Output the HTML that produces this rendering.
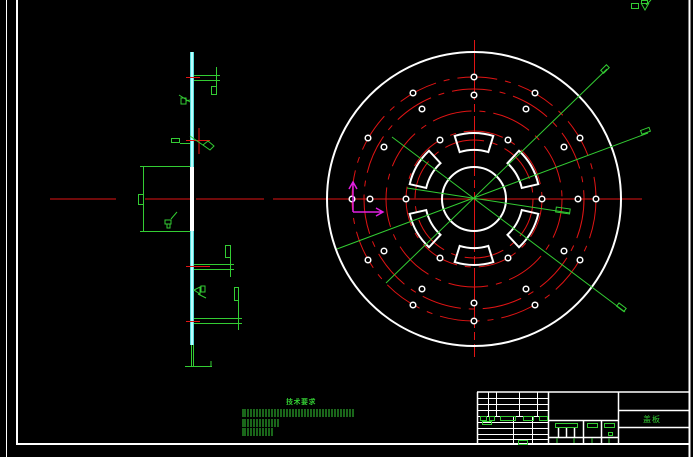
<!DOCTYPE html>
<html><head><meta charset="utf-8"><style>
html,body{margin:0;padding:0;background:#000;width:693px;height:457px;overflow:hidden}
svg{display:block}
text{font-family:"Liberation Sans","Noto Sans CJK SC",sans-serif}
</style></head><body>
<svg width="693" height="457" viewBox="0 0 693 457" xmlns="http://www.w3.org/2000/svg">
<rect width="693" height="457" fill="#000"/>
<g stroke="#fff" fill="none">
<line x1="6.5" y1="0" x2="6.5" y2="457" stroke-width="1"/>
<line x1="17" y1="0" x2="17" y2="444" stroke-width="2"/>
<line x1="16" y1="444" x2="690" y2="444" stroke-width="2"/>
<line x1="689.5" y1="0" x2="689.5" y2="457" stroke-width="2"/>
</g>
<g stroke="#3c3" fill="none" stroke-width="1">
<rect x="631.5" y="3.5" width="7" height="5"/>
<rect x="641.5" y="0.5" width="6" height="3"/>
<path d="M641 3 L645 10 L649 3 M651 0 L646 5"/>
</g>
<g stroke="#e01414" stroke-width="1" fill="none">
<line x1="50" y1="199" x2="116" y2="199"/>
<line x1="145" y1="199" x2="190" y2="199"/>
<line x1="196" y1="199" x2="264" y2="199"/>
<line x1="273" y1="199" x2="642" y2="199"/>
<line x1="474.5" y1="40" x2="474.5" y2="357" stroke-dasharray="60 4 8 4"/>
<g stroke-dasharray="40 8 6 8">
<circle cx="474" cy="199" r="122"/>
<circle cx="474" cy="199" r="110"/>
<circle cx="474" cy="199" r="88"/>
<circle cx="474" cy="199" r="68"/>
<circle cx="474" cy="199" r="59"/>
</g>
</g>
<circle cx="474" cy="199" r="147" stroke="#fff" stroke-width="2" fill="none"/>
<circle cx="474" cy="199" r="32" stroke="#fff" stroke-width="2" fill="none"/>
<g stroke="#fff" stroke-width="2" fill="none">
<path id="s" d="M454.7,135.9 A66 66 0 0 1 493.3,135.9 L488.3,152.1 A49 49 0 0 0 459.7,152.1 Z"/>
<use href="#s" transform="rotate(60 474 199)"/>
<use href="#s" transform="rotate(120 474 199)"/>
<use href="#s" transform="rotate(180 474 199)"/>
<use href="#s" transform="rotate(240 474 199)"/>
<use href="#s" transform="rotate(300 474 199)"/>
</g>
<g stroke="#fff" stroke-width="1.5" fill="#000">
<circle cx="474" cy="77" r="2.8"/><circle cx="535" cy="93" r="2.8"/><circle cx="580" cy="138" r="2.8"/><circle cx="596" cy="199" r="2.8"/><circle cx="580" cy="260" r="2.8"/><circle cx="535" cy="305" r="2.8"/><circle cx="474" cy="321" r="2.8"/><circle cx="413" cy="305" r="2.8"/><circle cx="368" cy="260" r="2.8"/><circle cx="352" cy="199" r="2.8"/><circle cx="368" cy="138" r="2.8"/><circle cx="413" cy="93" r="2.8"/>
<circle cx="474" cy="95" r="2.8"/><circle cx="526" cy="109" r="2.8"/><circle cx="564" cy="147" r="2.8"/><circle cx="578" cy="199" r="2.8"/><circle cx="564" cy="251" r="2.8"/><circle cx="526" cy="289" r="2.8"/><circle cx="474" cy="303" r="2.8"/><circle cx="422" cy="289" r="2.8"/><circle cx="384" cy="251" r="2.8"/><circle cx="370" cy="199" r="2.8"/><circle cx="384" cy="147" r="2.8"/><circle cx="422" cy="109" r="2.8"/>
<circle cx="542" cy="199" r="2.8"/><circle cx="508" cy="140" r="2.8"/><circle cx="440" cy="140" r="2.8"/><circle cx="406" cy="199" r="2.8"/><circle cx="440" cy="258" r="2.8"/><circle cx="508" cy="258" r="2.8"/>
</g>
<g stroke="#3c3" stroke-width="1" fill="none">
<line x1="607" y1="69" x2="386" y2="283"/>
<line x1="648" y1="133" x2="337" y2="249"/>
<line x1="392" y1="137" x2="625" y2="312"/>
<line x1="407" y1="188" x2="570" y2="213"/>
<rect x="601" y="67" width="8" height="4" transform="rotate(-45 605 69)"/>
<rect x="641" y="129" width="9" height="4" transform="rotate(-20 645 131)"/>
<rect x="617" y="305" width="9" height="4" transform="rotate(37 621 307)"/>
<rect x="556" y="208" width="14" height="5" transform="rotate(8 563 210)"/>
</g>
<g stroke="#e020e0" stroke-width="1.5" fill="none">
<path d="M353 212 L353 182 M349 189 L353 182 L357 189 M353 212 L383 212 M376 208 L383 212 L376 216"/>
</g>
<rect x="190" y="52" width="4" height="293" fill="#5dd" />
<rect x="191" y="52" width="2" height="293" fill="#bff" />
<rect x="190" y="167" width="4" height="64" fill="#fff"/>
<g stroke="#e01414" stroke-width="1">
<line x1="186" y1="77.5" x2="200" y2="77.5"/>
<line x1="186" y1="140.5" x2="210" y2="140.5"/>
<line x1="199" y1="128" x2="199" y2="154"/>
<line x1="186" y1="266.5" x2="210" y2="266.5"/>
<line x1="186" y1="321.5" x2="200" y2="321.5"/>
</g>
<g stroke="#3c3" stroke-width="1" fill="none">
<line x1="140" y1="166.5" x2="190" y2="166.5"/>
<line x1="140" y1="231.5" x2="190" y2="231.5"/>
<line x1="143.5" y1="166" x2="143.5" y2="232"/>
<rect x="138.5" y="194.5" width="5" height="10"/>
<line x1="194" y1="75.5" x2="220" y2="75.5"/>
<line x1="194" y1="80.5" x2="220" y2="80.5"/>
<line x1="216.5" y1="67" x2="216.5" y2="90"/>
<rect x="211.5" y="86.5" width="5" height="8"/>
<path d="M179 95 L190 102 M181 98 h5 v6 h-5 z M186 101 L190 100"/>
<rect x="171.5" y="138.5" width="8" height="4"/>
<line x1="180" y1="143.5" x2="190" y2="143.5"/>
<path d="M190 136 L210 150 M203 145 L208 141 L214 146 L210 150 Z"/>
<path d="M165 220 h6 v4 h-6 z M167 224 v4 h3 v-4 M171 219 L177 212"/>
<line x1="194" y1="264.5" x2="234" y2="264.5"/>
<line x1="194" y1="269.5" x2="234" y2="269.5"/>
<line x1="230.5" y1="257" x2="230.5" y2="277"/>
<rect x="225.5" y="245.5" width="5" height="12"/>
<path d="M194 290 L200 287 L200 294 Z M201 286 h4 v6 h-4 z M198 294 L206 298"/>
<line x1="194" y1="318.5" x2="242" y2="318.5"/>
<line x1="194" y1="323.5" x2="242" y2="323.5"/>
<line x1="238.5" y1="300" x2="238.5" y2="330"/>
<rect x="234.5" y="287.5" width="4" height="13"/>
<line x1="191.5" y1="345" x2="191.5" y2="366"/>
<line x1="193.5" y1="345" x2="193.5" y2="366"/>
<line x1="185" y1="366.5" x2="212" y2="366.5"/>
<line x1="211" y1="361" x2="211" y2="367"/>
</g>
<text x="286" y="404" font-size="7" font-weight="bold" fill="#3c3" letter-spacing="0.5">技术要求</text>
<g stroke="#3c3" stroke-width="1">
<path d="M243 409v8 M245 409v8 M248 409v8 M251 409v8 M254 409v8 M257 409v8 M260 409v8 M263 409v8 M266 409v8 M269 409v8 M272 409v8 M275 409v8 M278 409v8 M281 409v8 M284 409v8 M287 409v8 M290 409v8 M293 409v8 M296 409v8 M299 409v8 M302 409v8 M305 409v8 M308 409v8 M311 409v8 M314 409v8 M317 409v8 M320 409v8 M323 409v8 M326 409v8 M329 409v8 M332 409v8 M335 409v8 M338 409v8 M341 409v8 M344 409v8 M347 409v8 M350 409v8 M353 409v8"/>
<path d="M243 419v8 M245 419v8 M248 419v8 M251 419v8 M254 419v8 M257 419v8 M260 419v8 M263 419v8 M266 419v8 M269 419v8 M272 419v8 M275 419v8 M278 419v8"/>
<path d="M243 428v8 M245 428v8 M248 428v8 M251 428v8 M254 428v8 M257 428v8 M260 428v8 M263 428v8 M266 428v8 M269 428v8 M272 428v8"/>
</g>
<g stroke="#fff" stroke-width="1.5" fill="none">
<line x1="477" y1="392" x2="690" y2="392"/>
<line x1="477.5" y1="392" x2="477.5" y2="444"/>
<line x1="548.5" y1="392" x2="548.5" y2="444"/>
<line x1="618.5" y1="392" x2="618.5" y2="444"/>
<line x1="618" y1="410.5" x2="690" y2="410.5"/>
<line x1="618" y1="427.5" x2="690" y2="427.5"/>
<line x1="548" y1="420.5" x2="618" y2="420.5"/>
<line x1="548" y1="437.5" x2="618" y2="437.5"/>
<line x1="583.5" y1="420" x2="583.5" y2="444"/>
<line x1="601.5" y1="420" x2="601.5" y2="444"/>
<line x1="558.5" y1="427" x2="558.5" y2="437"/>
<line x1="566.5" y1="427" x2="566.5" y2="437"/>
<line x1="574.5" y1="427" x2="574.5" y2="437"/>
</g>
<g stroke="#fff" stroke-width="1" fill="none">
<path d="M477 398.5h71 M477 404.5h71 M477 410.5h71 M477 416.5h71 M477 422.5h71 M477 428.5h71 M477 434.5h71 M477 439.5h71"/>
<path d="M488.5 392v24 M496.5 392v24 M519.5 392v24 M537.5 392v24 M513.5 416v28 M532.5 416v28"/>
</g>
<g stroke="#3c3" stroke-width="1" fill="none">
<rect x="480.5" y="416.5" width="6" height="4"/><rect x="489.5" y="416.5" width="5" height="4"/><rect x="500.5" y="416.5" width="15" height="4"/><rect x="523.5" y="416.5" width="10" height="4"/><rect x="539.5" y="416.5" width="8" height="4"/>
<rect x="482.5" y="421.5" width="9" height="3"/><rect x="518.5" y="440.5" width="9" height="4"/>
<rect x="555.5" y="423.5" width="22" height="4"/><rect x="587.5" y="423.5" width="10" height="4"/><rect x="604.5" y="423.5" width="10" height="4"/><rect x="608.5" y="432.5" width="4" height="3"/>
<path d="M557 438v5 M574 438v5 M592 438v5 M609 438v5"/>
</g>
<text x="643" y="422" font-size="8" fill="#3c3" letter-spacing="1">盖板</text>
</svg>
</body></html>
